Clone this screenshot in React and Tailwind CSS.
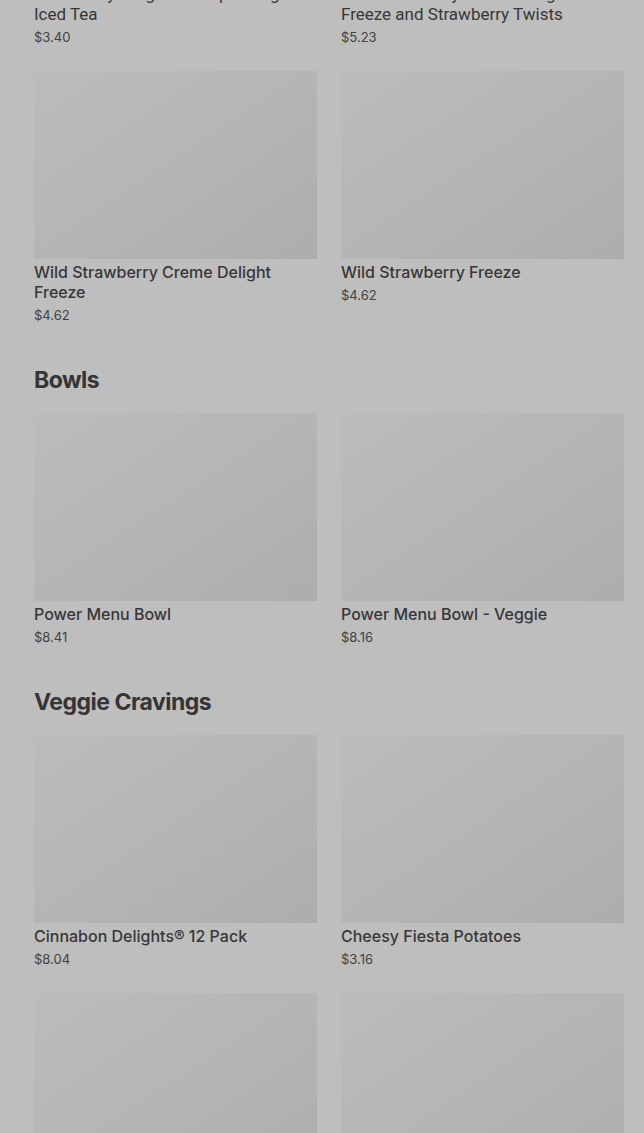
const sections = [
  {
    title: null,
    items: [
      { name: 'Strawberry Dragonfruit Sparkling\nIced Tea', price: '$3.40', roboto: true },
      { name: 'Wild Strawberry Creme Delight\nFreeze and Strawberry Twists', price: '$5.23', roboto: true },
      { name: 'Wild Strawberry Creme Delight Freeze', price: '$4.62' },
      { name: 'Wild Strawberry Freeze', price: '$4.62' },
    ],
  },
  {
    title: 'Bowls',
    items: [
      { name: 'Power Menu Bowl', price: '$8.41' },
      { name: 'Power Menu Bowl - Veggie', price: '$8.16' },
    ],
  },
  {
    title: 'Veggie Cravings',
    items: [
      { name: 'Cinnabon Delights® 12 Pack', price: '$8.04' },
      { name: 'Cheesy Fiesta Potatoes', price: '$3.16' },
      { name: 'Bean Burrito', price: '$1.99' },
      { name: 'Black Bean Crunchwrap Supreme®', price: '$5.89' },
    ],
  },
]

function Card({ item }) {
  return (
    <div className="flex flex-col">
      <div className="h-[188px] bg-gradient-to-br from-[#bcbcbc] via-[#b5b5b5] to-[#adadad]" />
      <h3
        className={`mt-[3px] leading-[20px] text-[#373737] whitespace-pre-line ${
          item.roboto ? "text-[17px] font-['Roboto',sans-serif]" : "text-[16px] font-['Inter',sans-serif] font-medium"
        }`}
      >
        {item.name}
      </h3>
      <p className="mt-[3px] text-[13px] leading-[20px] text-[#424242] font-['Inter',sans-serif]">{item.price}</p>
    </div>
  )
}

export default function App() {
  return (
    <div className="min-h-screen bg-[#bebebe] overflow-hidden">
      <div className="pl-[34px] pr-[20px] -mt-[207px] pb-10">
        {sections.map((s, i) => (
          <section key={i} className={i > 0 ? 'mt-[41px]' : ''}>
            {s.title && (
              <h2 className="mb-[19px] text-[23px] leading-[28px] font-bold tracking-[-0.5px] text-[#353535] font-['Inter',sans-serif]">
                {s.title}
              </h2>
            )}
            <div className="grid grid-cols-2 gap-x-[24px] gap-y-[24px]">
              {s.items.map((it) => (
                <Card key={it.name} item={it} />
              ))}
            </div>
          </section>
        ))}
      </div>
    </div>
  )
}
